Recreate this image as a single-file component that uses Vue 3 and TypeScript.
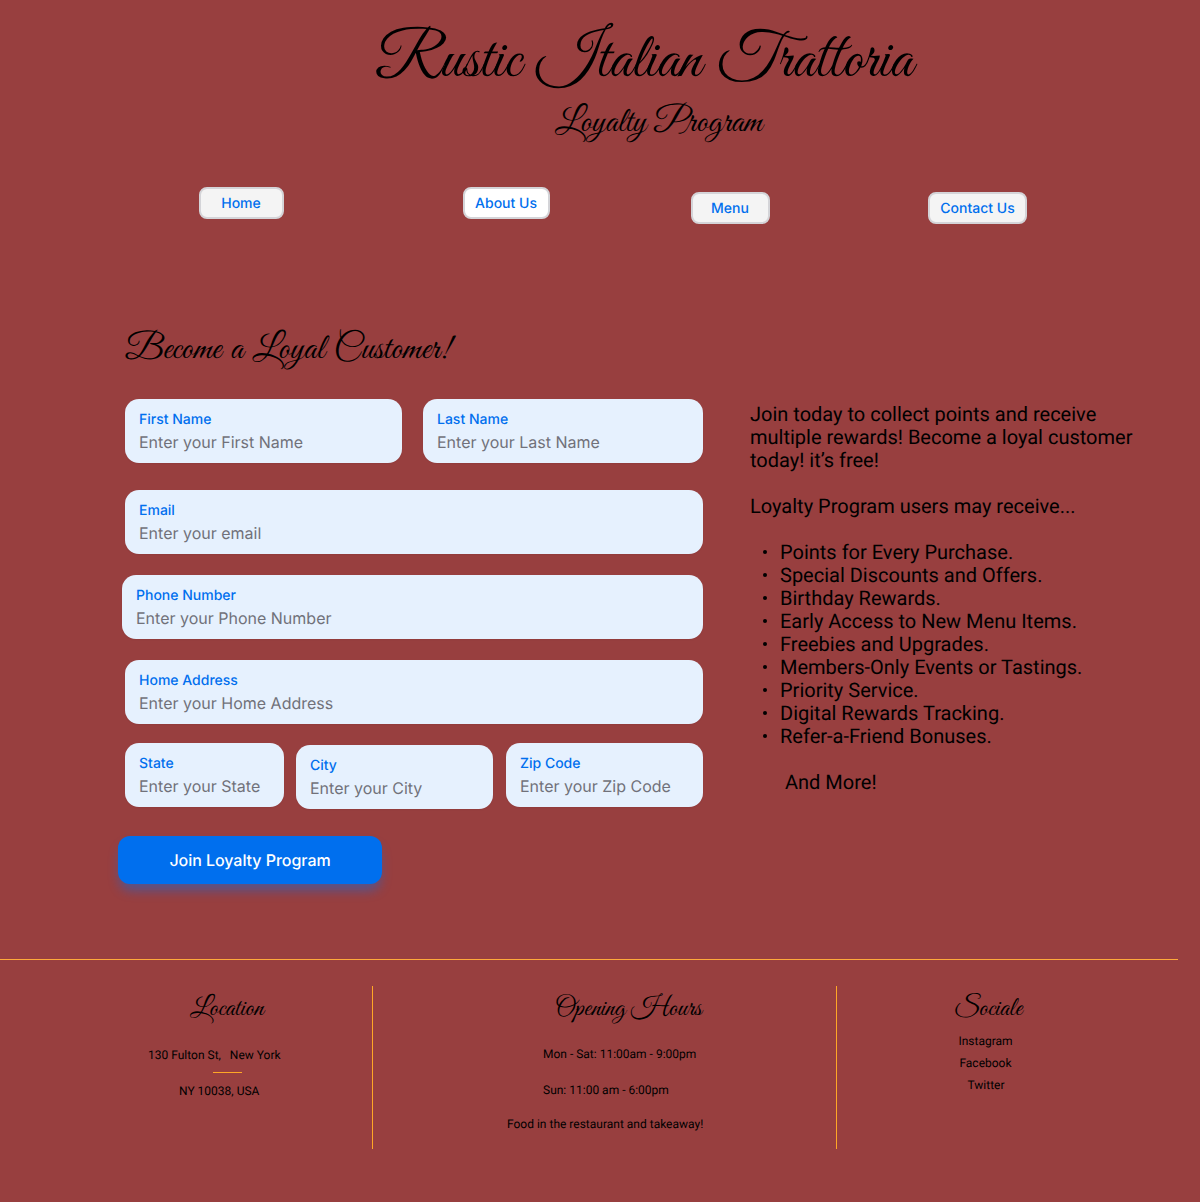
<script setup lang="ts">
interface NavItem {
  label: string
  id: string
}

interface Field {
  id: string
  label: string
  placeholder: string
}

const navItems: NavItem[] = [
  { label: 'Home', id: 'home' },
  { label: 'About Us', id: 'about' },
  { label: 'Menu', id: 'menu' },
  { label: 'Contact Us', id: 'contact' },
]

const rows: { id: string; fields: Field[] }[] = [
  {
    id: 'name',
    fields: [
      { id: 'first', label: 'First Name', placeholder: 'Enter your First Name' },
      { id: 'last', label: 'Last Name', placeholder: 'Enter your Last Name' },
    ],
  },
  { id: 'contact', fields: [{ id: 'email', label: 'Email', placeholder: 'Enter your email' }] },
  { id: 'tel', fields: [{ id: 'phone', label: 'Phone Number', placeholder: 'Enter your Phone Number' }] },
  { id: 'street', fields: [{ id: 'address', label: 'Home Address', placeholder: 'Enter your Home Address' }] },
  {
    id: 'region',
    fields: [
      { id: 'state', label: 'State', placeholder: 'Enter your State' },
      { id: 'city', label: 'City', placeholder: 'Enter your City' },
      { id: 'zip', label: 'Zip Code', placeholder: 'Enter your Zip Code' },
    ],
  },
]

const perks: string[] = [
  'Points for Every Purchase.',
  'Special Discounts and Offers.',
  'Birthday Rewards.',
  'Early Access to New Menu Items.',
  'Freebies and Upgrades.',
  'Members-Only Events or Tastings.',
  'Priority Service.',
  'Digital Rewards Tracking.',
  'Refer-a-Friend Bonuses.',
]
</script>

<template>
  <div class="page">
    <header class="header">
      <h1 class="title script">Rustic Italian Trattoria</h1>
      <p class="subtitle script">Loyalty Program</p>
    </header>

    <nav class="nav">
      <button v-for="item in navItems" :key="item.id" type="button" class="nav-btn" :class="item.id">
        {{ item.label }}
      </button>
    </nav>

    <main class="main">
      <section class="join">
        <h2 class="join-title script">Become a Loyal Customer!</h2>
        <div v-for="row in rows" :key="row.id" class="row" :class="'row-' + row.id">
          <div v-for="field in row.fields" :key="field.id" class="field" :class="'field-' + field.id">
            <span class="field-label">{{ field.label }}</span>
            <span class="field-hint">{{ field.placeholder }}</span>
          </div>
        </div>
        <button type="button" class="submit">Join Loyalty Program</button>
      </section>

      <section class="perks">
        <p class="intro">Join today to collect points and receive multiple rewards! Become a loyal customer today! it’s free!</p>
        <p>Loyalty Program users may receive...</p>
        <ul>
          <li v-for="perk in perks" :key="perk">{{ perk }}</li>
        </ul>
        <p class="more">And More!</p>
      </section>
    </main>

    <footer class="footer">
      <section class="location">
        <h3 class="script">Location</h3>
        <p class="street">130 Fulton St, &nbsp; New York</p>
        <div class="dash"></div>
        <p class="zip">NY 10038, USA</p>
      </section>
      <section class="hours">
        <h3 class="script">Opening Hours</h3>
        <p class="weekdays">Mon - Sat: 11:00am - 9:00pm</p>
        <p class="sunday">Sun: 11:00 am - 6:00pm</p>
        <p class="takeaway">Food in the restaurant and takeaway!</p>
      </section>
      <section class="social">
        <h3 class="script">Sociale</h3>
        <p class="instagram">Instagram</p>
        <p class="facebook">Facebook</p>
        <p class="twitter">Twitter</p>
      </section>
    </footer>
  </div>
</template>

<style>
body {
  margin: 0;
  background: #983f3f;
}
</style>

<style scoped>
.page {
  width: 1200px;
  height: 1202px;
  overflow: hidden;
  background: #983f3f;
  color: #000;
  font-family: Roboto, 'Liberation Sans', sans-serif;
  text-rendering: geometricPrecision;
}

h1, h2, h3, p, ul {
  margin: 0;
  padding: 0;
  font-weight: 400;
}

.script {
  font-family: 'Great Vibes', 'Liberation Serif', serif;
  white-space: nowrap;
}

.header {
  height: 187px;
  display: flex;
  flex-direction: column;
  align-items: flex-start;
}

.title {
  margin: 28px 0 0 375px;
  font-size: 63.7px;
  line-height: 68px;
  word-spacing: 5px;
}

.subtitle {
  margin: 10px 0 0 555px;
  font-size: 35.3px;
  line-height: 36px;
  word-spacing: 1px;
}

.nav {
  display: flex;
  align-items: flex-start;
  height: 133px;
  padding-left: 199px;
}

.nav-btn {
  box-sizing: border-box;
  height: 32px;
  padding: 1px 1px 0 0;
  border: 2px solid #d4d4d8;
  border-radius: 8px;
  background: #f4f4f4;
  color: #006fee;
  font: 500 14px/21px Inter, sans-serif;
  text-rendering: geometricPrecision;
  white-space: nowrap;
}

.home { width: 85px; }
.about { width: 87px; margin-left: 179px; background: #fff; }
.menu { width: 79px; margin: 5px 0 0 141px; }
.contact { width: 99px; margin: 5px 0 0 158px; padding-right: 0; }

.main {
  display: flex;
  align-items: flex-start;
  height: 639px;
}

.join {
  width: 585px;
  padding-left: 118px;
}

.join-title {
  margin: 13px 0 0 7px;
  font-size: 36px;
  line-height: 36px;
  word-spacing: 3px;
}

.row {
  display: flex;
  align-items: flex-start;
  padding-left: 7px;
}

.row-name { margin-top: 30px; gap: 21px; }
.row-contact { margin-top: 27px; }
.row-tel { margin-top: 21px; padding-left: 4px; }
.row-street { margin-top: 21px; }
.row-region { margin-top: 19px; height: 64px; }

.field {
  box-sizing: border-box;
  display: flex;
  flex-direction: column;
  flex: 1;
  height: 64px;
  padding: 11px 14px 9px;
  border-radius: 14px;
  background: #e6f1fe;
  box-shadow: 0 1px 2px rgba(0, 0, 0, 0.05);
  font-family: Inter, sans-serif;
  white-space: nowrap;
}

.field-first { flex: 0 0 277px; }
.field-state { flex: 0 0 159px; }
.field-city { flex: 0 0 197px; margin: 2px 13px 0 12px; }

.field-label {
  color: #006fee;
  font-size: 14px;
  font-weight: 500;
  line-height: 20px;
}

.field-hint {
  color: #71717a;
  font-size: 16px;
  line-height: 24px;
}

.submit {
  display: block;
  width: 264px;
  height: 48px;
  margin-top: 29px;
  padding: 0;
  border: 0;
  border-radius: 12px;
  background: #006fee;
  box-shadow: 0 8px 12px -2px rgba(0, 111, 238, 0.48);
  color: #fff;
  font: 500 16px/24px Inter, sans-serif;
  letter-spacing: -0.04px;
  text-rendering: geometricPrecision;
}

.perks {
  width: 400px;
  margin: 83px 0 0 47px;
  font-size: 20px;
  line-height: 23px;
}

.intro { margin-bottom: 23px; }

ul {
  margin: 23px 0;
  list-style: none;
}

li {
  display: flex;
  align-items: center;
}

li::before {
  content: '';
  width: 4px;
  height: 4px;
  margin: 0 13px 1px 13px;
  border-radius: 50%;
  background: #000;
}

.more { margin-left: 35px; }

.footer {
  display: flex;
  align-items: flex-start;
  width: 1178px;
  border-top: 1px solid #ffa93b;
  font-size: 12px;
  line-height: 14px;
}

.footer section {
  box-sizing: border-box;
  height: 163px;
  margin-top: 26px;
}

.footer h3 {
  font-size: 27px;
  line-height: 28px;
}

.location { width: 373px; border-right: 1px solid #ffa726; }
.location h3 { margin: 9px 0 0 190px; }
.street { margin: 25px 0 0 148px; }
.dash { width: 29px; height: 1px; margin: 10px 0 0 213px; background: #ffa726; }
.zip { margin: 11px 0 0 179px; }

.hours { width: 464px; border-right: 1px solid #ffa726; }
.hours h3 { margin: 9px 0 0 182px; word-spacing: 1px; }
.weekdays { margin: 24px 0 0 170px; }
.sunday { margin: 22px 0 0 170px; }
.takeaway { margin: 20px 0 0 134px; }

.social { width: 341px; }
.social h3 { margin: 9px 0 0 117px; }
.instagram { margin: 11px 0 0 121.4px; }
.facebook { margin: 8px 0 0 122.4px; }
.twitter { margin: 8px 0 0 130.5px; }
</style>
